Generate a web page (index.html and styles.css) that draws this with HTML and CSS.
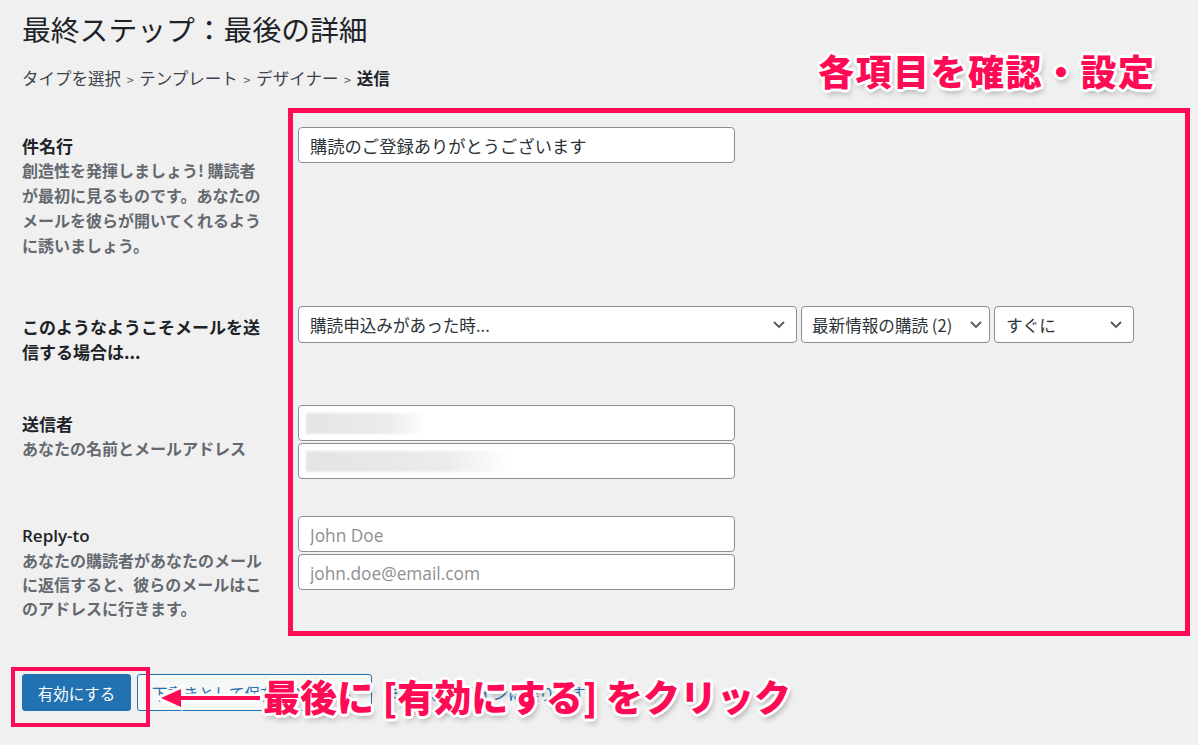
FILE: index.html
```html
<!DOCTYPE html>
<html lang="ja">
  <head>
    <meta charset="UTF-8" />
    <meta name="viewport" content="width=device-width, initial-scale=1.0" />
    <title>最終ステップ</title>
    <link rel="stylesheet" href="styles.css">
  </head>
  <body>
    <div class="wrap">
      <h1>最終ステップ：最後の詳細</h1>

      <!-- Breadcrumb -->
      <p class="crumbs">
        タイプを選択 <span class="sep">&gt;</span> テンプレート <span class="sep">&gt;</span> デザイナー <span class="sep">&gt;</span> <b>送信</b>
      </p>

      <!-- Form rows -->
      <div class="form">
        <div class="row row-subject">
          <div class="label">
            <div class="name">件名行</div>
            <div class="desc">創造性を発揮しましょう! 購読者が最初に見るものです。あなたのメールを彼らが開いてくれるように誘いましょう。</div>
          </div>
          <div class="field">
            <input class="text" type="text" value="購読のご登録ありがとうございます" />
          </div>
        </div>

        <div class="row row-when">
          <div class="label">
            <div class="name">このようなようこそメールを送信する場合は...</div>
          </div>
          <div class="field selects">
            <div class="select sel-event">
              <span>購読申込みがあった時...</span>
              <svg width="14" height="10" viewBox="0 0 14 10"><path d="M2 2 L7 7 L12 2" fill="none" stroke="#50575e" stroke-width="1.8"/></svg>
            </div>
            <div class="select sel-list">
              <span>最新情報の購読 (2)</span>
              <svg width="14" height="10" viewBox="0 0 14 10"><path d="M2 2 L7 7 L12 2" fill="none" stroke="#50575e" stroke-width="1.8"/></svg>
            </div>
            <div class="select sel-time">
              <span>すぐに</span>
              <svg width="14" height="10" viewBox="0 0 14 10"><path d="M2 2 L7 7 L12 2" fill="none" stroke="#50575e" stroke-width="1.8"/></svg>
            </div>
          </div>
        </div>

        <div class="row row-sender">
          <div class="label">
            <div class="name">送信者</div>
            <div class="desc">あなたの名前とメールアドレス</div>
          </div>
          <div class="field stack">
            <div class="text blurred"><span class="blur blur-name"></span></div>
            <div class="text blurred"><span class="blur blur-mail"></span></div>
          </div>
        </div>

        <div class="row row-reply">
          <div class="label">
            <div class="name latin">Reply-to</div>
            <div class="desc">あなたの購読者があなたのメールに返信すると、彼らのメールはこのアドレスに行きます。</div>
          </div>
          <div class="field stack">
            <input class="text" type="text" placeholder="John Doe" />
            <input class="text" type="text" placeholder="john.doe@email.com" />
          </div>
        </div>
      </div>

      <!-- Actions -->
      <div class="actions">
        <button class="btn btn-primary">有効にする</button>
        <button class="btn btn-secondary">下書きとして保存して閉じる</button>
        <a class="back" href="#">または、デザインに戻ります</a>
      </div>
    </div>

    <!-- Annotations -->
    <div class="note-box note-fields"></div>
    <div class="note-box note-button"></div>
    <div class="note-text note-top">各項目を確認・設定</div>
    <div class="note-text note-bottom">最後に [有効にする] をクリック</div>
    <svg class="note-arrow" width="110" height="30" viewBox="0 0 110 30">
      <path d="M104 15 L22 15" stroke="#fff" stroke-width="9" stroke-linecap="round"/>
      <path d="M4 15 L26 5 L26 25 Z" fill="#fff" stroke="#fff" stroke-width="5" stroke-linejoin="round"/>
      <path d="M104 15 L22 15" stroke="#ff0a55" stroke-width="4"/>
      <path d="M5 15 L25 6 L25 24 Z" fill="#ff0a55"/>
    </svg>
  </body>
</html>
```

FILE: styles.css
```css
/* General Styling */
body {
  margin: 0;
  background: #f0f0f1;
  color: #1d2327;
  font-family: "Noto Sans CJK JP", "Noto Sans", sans-serif;
  overflow: hidden;
}

.wrap {
  padding: 0 0 0 22px;
}

h1 {
  margin: 0;
  padding-top: 10px;
  font-size: 28.8px;
  font-weight: 400;
  line-height: 38px;
  color: #1d2327;
}

/* Breadcrumb */
.crumbs {
  margin: 19px 0 0;
  font-size: 16.5px;
  line-height: 22px;
  color: #3c434a;
}

.crumbs .sep {
  font-size: 12.5px;
  color: #50575e;
  padding: 0 2px;
}

.crumbs b {
  color: #1d2327;
}

/* Form rows */
.form {
  margin-top: 36px;
}

.row {
  display: flex;
  align-items: flex-start;
}

.label {
  width: 246px;
  flex: none;
  padding-top: 7px;
  margin-right: 30px;
}

.name {
  font-size: 17px;
  font-weight: 700;
  line-height: 24px;
  color: #1d2327;
}

.name.latin {
  font-family: "Open Sans", "Noto Sans CJK JP", sans-serif;
  font-weight: 600;
}

.desc {
  font-size: 16px;
  font-weight: 700;
  line-height: 25px;
  color: #646970;
}

.row-subject { margin-bottom: 48px; }
.row-when { margin-bottom: 41px; }
.row-when .name { line-height: 25px; }
.row-when .label { padding-top: 8px; }
.row-sender { margin-bottom: 37px; }
.row-sender .desc { line-height: 24px; }
.row-reply .desc { line-height: 24px; }
.row-reply .label { padding-top: 8px; }

.field {
  display: flex;
}

.stack {
  flex-direction: column;
  gap: 2px;
}

.text {
  box-sizing: border-box;
  width: 437px;
  height: 36px;
  margin: 0;
  padding: 0 11px;
  border: 1px solid #8c8f94;
  border-radius: 4px;
  background: #fff;
  font-family: "Noto Sans CJK JP", sans-serif;
  font-size: 17.3px;
  color: #2c3338;
  outline: none;
}

.text::placeholder {
  color: #8c8f94;
  font-family: "Open Sans", "Noto Sans CJK JP", sans-serif;
}

.blurred {
  display: flex;
  align-items: center;
  padding: 0 7px;
}

.blur {
  display: block;
  height: 21px;
  background: linear-gradient(to right, #e4e4e4, #ececec 70%, #fff);
  filter: blur(1px);
}

.blur-name { width: 119px; }
.blur-mail { width: 204px; }

/* Selects */
.selects {
  gap: 4px;
}

.select {
  box-sizing: border-box;
  height: 37px;
  display: flex;
  align-items: center;
  justify-content: space-between;
  padding: 0 10px 0 11px;
  border: 1px solid #8c8f94;
  border-radius: 4px;
  background: #fff;
  font-size: 16.6px;
  color: #2c3338;
  white-space: nowrap;
}

.sel-event { width: 499px; }
.sel-list { width: 189px; padding: 0 6px 0 10px; }
.sel-time { width: 140px; }

/* Actions */
.actions {
  margin-top: 54px;
  display: flex;
  align-items: center;
  gap: 6px;
}

.btn {
  box-sizing: border-box;
  height: 37px;
  padding: 0 14px;
  border-radius: 3px;
  font-family: "Noto Sans CJK JP", sans-serif;
  font-size: 15.5px;
  cursor: pointer;
}

.btn-primary {
  width: 109px;
  background: #2271b1;
  border: 1px solid #2271b1;
  color: #fff;
}

.btn-secondary {
  width: 235px;
  text-align: left;
  background: #f6f7f7;
  border: 1px solid #2271b1;
  color: #2271b1;
}

.back {
  margin-left: 6px;
  font-size: 15.5px;
  color: #2271b1;
  text-decoration: none;
}

/* Annotations */
.note-box {
  position: absolute;
  box-sizing: border-box;
  border: 5px solid #ff0a55;
}

.note-fields {
  left: 288px;
  top: 108px;
  width: 902px;
  height: 528px;
}

.note-button {
  left: 11px;
  top: 667px;
  width: 139px;
  height: 60px;
  border-width: 4px;
}

.note-text {
  position: absolute;
  font-family: "Noto Sans CJK JP", sans-serif;
  font-weight: 900;
  font-size: 36px;
  line-height: 44px;
  color: #ff0a55;
  white-space: nowrap;
  text-shadow:
    2px 0 0 #fff, -2px 0 0 #fff, 0 2px 0 #fff, 0 -2px 0 #fff,
    2px 2px 0 #fff, -2px -2px 0 #fff, 2px -2px 0 #fff, -2px 2px 0 #fff,
    3px 0 0 #fff, -3px 0 0 #fff, 0 3px 0 #fff, 0 -3px 0 #fff,
    2px 4px 6px rgba(0, 0, 0, 0.35);
}

.note-top {
  left: 818px;
  top: 48px;
  letter-spacing: 1.5px;
}

.note-bottom {
  left: 263px;
  top: 674px;
  font-size: 37px;
}

.note-arrow {
  position: absolute;
  left: 156px;
  top: 683px;
}
```
